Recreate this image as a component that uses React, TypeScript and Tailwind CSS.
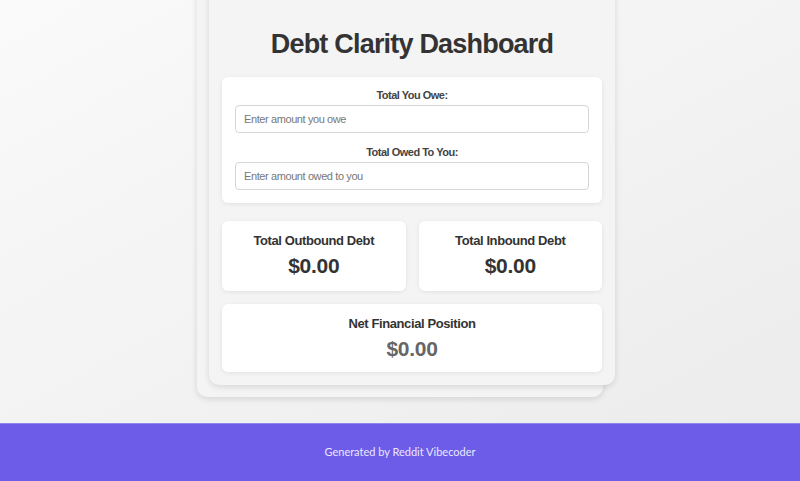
import React from "react";

export default function App() {
  return (
    <div className="flex min-h-[481px] flex-col" style={{ fontFamily: '"Liberation Sans", Arial, sans-serif' }}>
      <main className="flex h-[423px] justify-center overflow-hidden bg-gradient-to-br from-[#fafafa] to-[#ececed]">
        <div className="mt-[-20px] h-fit w-[406px] rounded-[10px] bg-[#f4f4f4] shadow-[0_2px_6px_rgba(0,0,0,0.12)]">
          <div className="translate-x-[12px] -translate-y-[12px] rounded-[10px] bg-[#f4f4f4] p-[13px] shadow-[0_2px_6px_rgba(0,0,0,0.12)]">
            <h1 className="mt-[46px] mb-[16px] text-center text-[27px] leading-[34px] font-bold tracking-[-0.8px] text-[#333]">
              Debt Clarity Dashboard
            </h1>
            <div className="rounded-[6px] bg-white px-[13px] pt-[11px] pb-[13px] shadow-[0_1px_4px_rgba(0,0,0,0.08)]">
              <label className="block text-center text-[11px] leading-[14px] font-bold tracking-[-0.5px] text-[#444]">Total You Owe:</label>
              <input
                className="mt-[3px] block h-[28px] w-full rounded-[4px] border border-[#d6d6d6] px-[8px] text-[11px] tracking-[-0.4px] text-[#333] outline-none placeholder:text-[#777]"
                placeholder="Enter amount you owe"
              />
              <label className="mt-[12px] block text-center text-[11px] leading-[14px] font-bold tracking-[-0.5px] text-[#444]">Total Owed To You:</label>
              <input
                className="mt-[3px] block h-[28px] w-full rounded-[4px] border border-[#d6d6d6] px-[8px] text-[11px] tracking-[-0.4px] text-[#333] outline-none placeholder:text-[#777]"
                placeholder="Enter amount owed to you"
              />
            </div>
            <div className="mt-[18px] grid grid-cols-2 gap-[13px]">
              <div className="flex h-[70px] flex-col items-center rounded-[6px] bg-white pt-[12px] shadow-[0_1px_4px_rgba(0,0,0,0.08)]">
                <div className="text-[13px] leading-[16px] font-bold tracking-[-0.4px] text-[#333]">Total Outbound Debt</div>
                <div className="mt-[4px] text-[21px] leading-[26px] font-bold tracking-[-0.3px] text-[#333]">$0.00</div>
              </div>
              <div className="flex h-[70px] flex-col items-center rounded-[6px] bg-white pt-[12px] shadow-[0_1px_4px_rgba(0,0,0,0.08)]">
                <div className="text-[13px] leading-[16px] font-bold tracking-[-0.4px] text-[#333]">Total Inbound Debt</div>
                <div className="mt-[4px] text-[21px] leading-[26px] font-bold tracking-[-0.3px] text-[#333]">$0.00</div>
              </div>
            </div>
            <div className="mt-[13px] flex h-[68px] flex-col items-center rounded-[6px] bg-white pt-[12px] shadow-[0_1px_4px_rgba(0,0,0,0.08)]">
              <div className="text-[13px] leading-[16px] font-bold tracking-[-0.4px] text-[#333]">Net Financial Position</div>
              <div className="mt-[4px] text-[21px] leading-[26px] font-bold tracking-[-0.3px] text-[#666]">$0.00</div>
            </div>
          </div>
        </div>
      </main>
      <footer className="flex h-[58px] items-center justify-center border-t border-[#8f85ee] bg-[#6c5ce7]">
        <span className="text-[11px] text-[#ebe8ff]" style={{ fontFamily: 'Lato, "Noto Sans", sans-serif' }}>
          Generated by Reddit Vibecoder
        </span>
      </footer>
    </div>
  );
}
